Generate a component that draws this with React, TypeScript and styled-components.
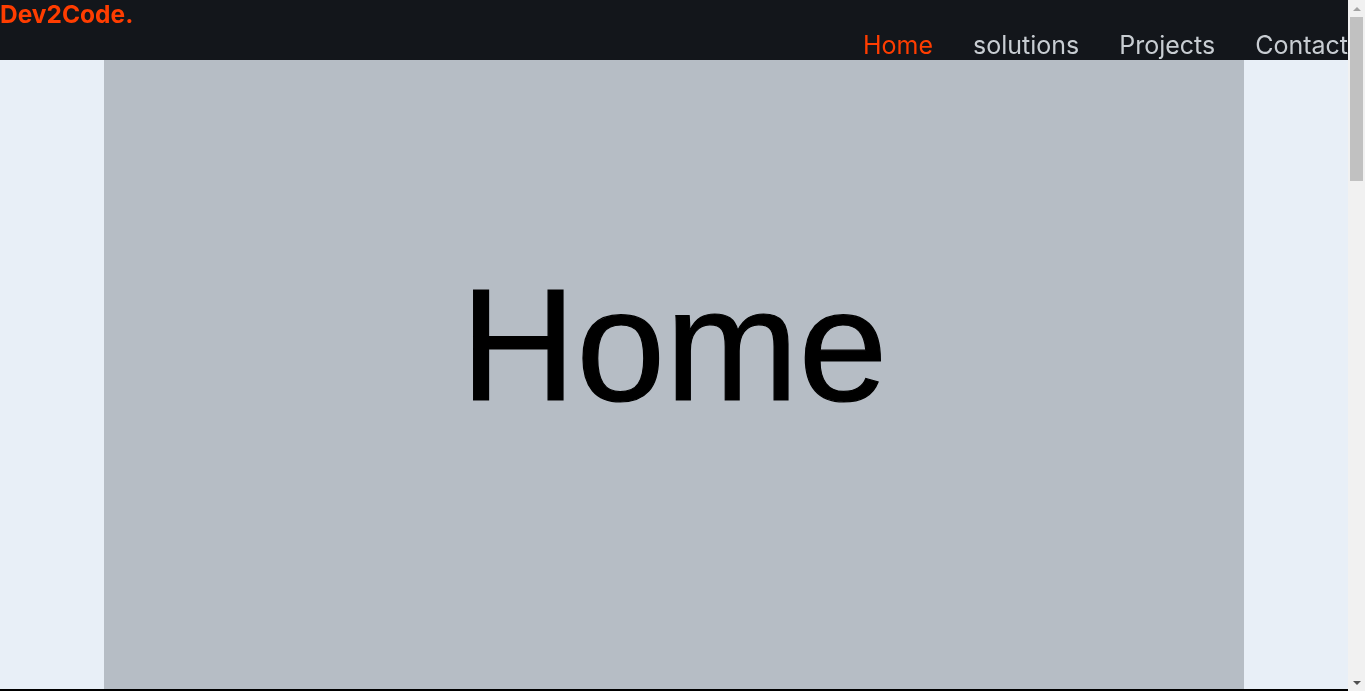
import * as React from 'react'
import styled, {createGlobalStyle} from 'styled-components'

const GlobalStyle = createGlobalStyle`
    html, body, #root {
        margin: 0;
        padding: 0;
        height: 100%;
        overflow: hidden;
    }

    body {
        background-color: #e8eff7;
        font-family: Inter, 'Liberation Sans', sans-serif;
    }

    * {
        box-sizing: border-box;
    }
`

const Window = styled.div`
    display: flex;
    height: 100vh;
`

const Viewport = styled.div`
    flex: 1;
    min-width: 0;
    overflow: hidden;
`

const ScrollBar = styled.div`
    flex: 0 0 17px;
    display: flex;
    flex-direction: column;
    background-color: #f1f1f1;
`

const ScrollButton = styled.div`
    height: 17px;
    display: flex;
    align-items: center;
    justify-content: center;
`

const ScrollTrack = styled.div`
    flex: 1;
    padding: 0 2px;
`

const ScrollThumb = styled.div`
    height: 164px;
    background-color: #c1c1c1;
`

const Header = styled.header`
    position: sticky;
    top: 0;
    z-index: 10;
    height: 60px;
    margin-bottom: -60px;
    background-color: #13161b;
    display: flex;
    justify-content: space-between;
`

const Logo = styled.div`
    font-family: Inter, 'Liberation Sans', sans-serif;
    font-weight: 700;
    font-size: 24.5px;
    line-height: 28px;
    color: #ff3d00;
`

const Nav = styled.nav`
    display: flex;
    align-items: flex-end;
    gap: 40px;
`

const NavItem = styled.a<{$active?: boolean}>`
    font-size: 25px;
    line-height: 30px;
    color: ${p => (p.$active ? '#ff3d00' : '#c8cdd2')};
    text-decoration: none;
    cursor: pointer;
`

const Section = styled.section`
    height: 100vh;
    border-bottom: 2px solid #000;
    display: flex;
    justify-content: center;
`

const Panel = styled.div`
    width: 1140px;
    height: 100%;
    background-color: #b6bdc5;
    display: flex;
    align-items: center;
    justify-content: center;
`

const Title = styled.h1`
    margin: 0;
    font-family: 'Liberation Sans', Arial, sans-serif;
    font-weight: 400;
    font-size: 160px;
    line-height: 1;
    color: #000;
    -webkit-text-stroke: 1.2px #000;
`

const links = ['Home', 'solutions', 'Projects', 'Contact']

const Arrow = ({up, color}: {up?: boolean, color: string}) => (
    <svg width='8' height='4' viewBox='0 0 8 4'>
        <path d={up ? 'M0 4 L4 0 L8 4 Z' : 'M0 0 L8 0 L4 4 Z'} fill={color}/>
    </svg>
)

export default function App() {
    const active = 'Home'
    return (
        <>
            <GlobalStyle/>
            <Window>
                <Viewport>
                    <Header>
                        <Logo>Dev2Code.</Logo>
                        <Nav>
                            {links.map(l => (
                                <NavItem key={l} $active={l === active}>{l}</NavItem>
                            ))}
                        </Nav>
                    </Header>
                    <main>
                        {links.map(l => (
                            <Section key={l}>
                                <Panel>
                                    <Title>{l}</Title>
                                </Panel>
                            </Section>
                        ))}
                    </main>
                </Viewport>
                <ScrollBar>
                    <ScrollButton><Arrow up color='#a3a3a3'/></ScrollButton>
                    <ScrollTrack>
                        <ScrollThumb/>
                    </ScrollTrack>
                    <ScrollButton><Arrow color='#505050'/></ScrollButton>
                </ScrollBar>
            </Window>
        </>
    )
}
